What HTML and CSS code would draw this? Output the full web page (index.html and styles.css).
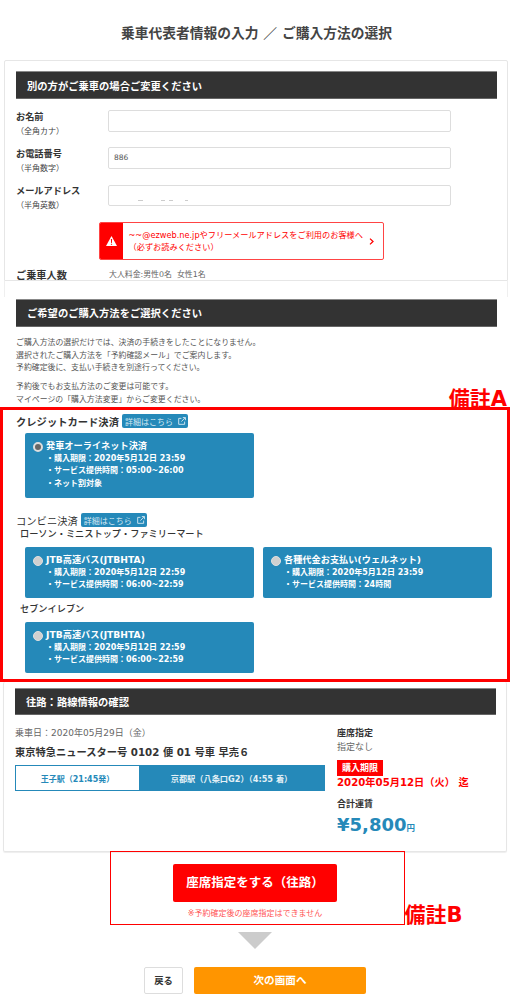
FILE: index.html
```html
<!DOCTYPE html>
<html lang="ja">
<head>
<meta charset="utf-8">
<title>乗車代表者情報の入力 ／ ご購入方法の選択</title>
<link rel="stylesheet" href="styles.css">
</head>
<body>
<h1 class="page-title">乗車代表者情報の入力 ／ ご購入方法の選択</h1>

<section class="card card-passenger">
  <h2 class="bar">別の方がご乗車の場合ご変更ください</h2>
  <div class="form-row">
    <div class="label"><b>お名前</b><span>（全角カナ）</span></div>
    <div class="input"></div>
  </div>
  <div class="form-row">
    <div class="label"><b>お電話番号</b><span>（半角数字）</span></div>
    <div class="input">886</div>
  </div>
  <div class="form-row">
    <div class="label"><b>メールアドレス</b><span>（半角英数）</span></div>
    <div class="input input-redacted"></div>
  </div>
  <a class="alert">
    <span class="alert-icon">
      <svg width="11" height="10" viewBox="0 0 11 10"><path fill="#fff" d="M5.5 0 11 10H0Z"/><path fill="#f00" d="M4.9 3h1.2l-.2 4H5.1ZM4.9 7.7h1.2v1.1H4.9Z"/></svg>
    </span>
    <span class="alert-text">~~@ezweb.ne.jpやフリーメールアドレスをご利用のお客様へ<br>（必ずお読みください）</span>
    <svg class="alert-chevron" width="5" height="7" viewBox="0 0 5 7"><path fill="none" stroke="#f00" stroke-width="1.3" d="M1 .6 4 3.5 1 6.4"/></svg>
  </a>
  <div class="count-row">
    <b>ご乗車人数</b>
    <span>大人料金:男性0名&nbsp;&nbsp;女性1名</span>
  </div>
</section>
<div class="card-stub"></div>

<section class="pay-intro">
  <h2 class="bar">ご希望のご購入方法をご選択ください</h2>
  <p>ご購入方法の選択だけでは、決済の手続きをしたことになりません。<br>選択されたご購入方法を「予約確認メール」でご案内します。<br>予約確定後に、支払い手続きを別途行ってください。</p>
  <p>予約後でもお支払方法のご変更は可能です。<br>マイページの「購入方法変更」からご変更ください。</p>
</section>

<section class="note-a">
  <strong class="note-label note-label-a">備註A</strong>
  <div class="method-head">
    <b class="method-title">クレジットカード決済</b>
    <a class="detail">詳細はこちら
      <svg width="8" height="8" viewBox="0 0 7 7"><path fill="none" stroke="#d5e8f2" stroke-width=".8" d="M3 1.2H.6v5.2h5.2V4M3 4l3.3-3.4M4.2.5h2.3v2.3"/></svg>
    </a>
  </div>
  <div class="option option-tall option-first">
    <div class="option-title"><i class="radio radio-on"></i>発車オーライネット決済</div>
    <div class="option-line">・購入期限：2020年5月12日 23:59</div>
    <div class="option-line">・サービス提供時間：05:00~26:00</div>
    <div class="option-line">・ネット割対象</div>
  </div>

  <div class="method-head method-head-second">
    <span class="method-title">コンビニ決済</span>
    <a class="detail">詳細はこちら
      <svg width="8" height="8" viewBox="0 0 7 7"><path fill="none" stroke="#d5e8f2" stroke-width=".8" d="M3 1.2H.6v5.2h5.2V4M3 4l3.3-3.4M4.2.5h2.3v2.3"/></svg>
    </a>
  </div>
  <div class="store">ローソン・ミニストップ・ファミリーマート</div>
  <div class="option-row">
    <div class="option">
      <div class="option-title"><i class="radio"></i>JTB高速バス(JTBHTA)</div>
      <div class="option-line">・購入期限：2020年5月12日 22:59</div>
      <div class="option-line">・サービス提供時間：06:00~22:59</div>
    </div>
    <div class="option">
      <div class="option-title"><i class="radio"></i>各種代金お支払い(ウェルネット)</div>
      <div class="option-line">・購入期限：2020年5月12日 23:59</div>
      <div class="option-line">・サービス提供時間：24時間</div>
    </div>
  </div>
  <div class="store store-second">セブンイレブン</div>
  <div class="option-row">
    <div class="option">
      <div class="option-title"><i class="radio"></i>JTB高速バス(JTBHTA)</div>
      <div class="option-line">・購入期限：2020年5月12日 22:59</div>
      <div class="option-line">・サービス提供時間：06:00~22:59</div>
    </div>
  </div>
</section>

<section class="card card-route">
  <h2 class="bar">往路：路線情報の確認</h2>
  <div class="route-cols">
    <div class="route-main">
      <div class="route-date">乗車日：2020年05月29日（金）</div>
      <div class="route-name">東京特急ニュースター号 0102 便 01 号車 早売６</div>
      <div class="route-bar">
        <span class="route-from">王子駅（21:45発）</span>
        <span class="route-to">京都駅（八条口G2）（4:55 着）</span>
      </div>
    </div>
    <div class="route-side">
      <div class="side-head">座席指定</div>
      <div class="side-value">指定なし</div>
      <div class="limit-badge">購入期限</div>
      <div class="limit-date">2020年05月12日（火） 迄</div>
      <div class="side-head side-total">合計運賃</div>
      <div class="price">¥5,800<small>円</small></div>
    </div>
  </div>
</section>

<section class="note-b">
  <strong class="note-label note-label-b">備註B</strong>
  <a class="seat-button">座席指定をする（往路）</a>
  <p class="seat-note">※予約確定後の座席指定はできません</p>
</section>

<div class="arrow"></div>

<div class="actions">
  <a class="back">戻る</a>
  <a class="next">次の画面へ</a>
</div>
</body>
</html>
```

FILE: styles.css
```css
* { box-sizing: border-box; }
html, body { margin: 0; padding: 0; }
body {
  width: 510px;
  height: 1000px;
  overflow: hidden;
  background: #fff;
  color: #333;
  font-family: "DejaVu Sans", "Noto Sans CJK JP", sans-serif;
}
h1, h2, p { margin: 0; }
a { display: block; }

.page-title {
  height: 60px;
  padding: 24px 0 0 3px;
  font-size: 13.75px;
  line-height: 18px;
  font-weight: 700;
  text-align: center;
  color: #444;
}

.card {
  width: 504px;
  border: 1px solid #e6e6e6;
  border-radius: 2px;
  padding-left: 11px;
}
.bar {
  width: 481px;
  background: #333;
  border-top: 1px solid #888;
  border-bottom: 1px solid #666;
  color: #fff;
  font-size: 10.3px;
  font-weight: 700;
  padding-left: 11px;
  display: flex;
  align-items: center;
}

.card-passenger {
  margin-left: 4px;
  height: 221px;
  padding-top: 10px;
  overflow: hidden;
  border-radius: 2px 2px 0 0;
}
.card-passenger .bar { height: 28px; margin-bottom: 9.5px; }
.form-row {
  display: grid;
  grid-template-columns: 92px 343px;
  height: 37.25px;
}
.label { display: flex; flex-direction: column; line-height: 15px; }
.label b { font-size: 9.2px; font-weight: 700; }
.label span { font-size: 8px; color: #444; }
.input {
  margin-top: 1.5px;
  height: 21.5px;
  border: 1px solid #ddd;
  border-radius: 2px;
  padding-left: 5px;
  font-size: 7.5px;
  line-height: 20px;
  color: #555;
}
.input-redacted {
  background:
    linear-gradient(#ccc, #ccc) 29px 14px / 5px 1px no-repeat,
    linear-gradient(#ccc, #ccc) 52px 14px / 4px 1px no-repeat,
    linear-gradient(#ccc, #ccc) 60px 14px / 4px 1px no-repeat,
    linear-gradient(#ccc, #ccc) 76px 14px / 3px 1px no-repeat;
}
.alert {
  display: flex;
  align-items: center;
  width: 285px;
  height: 38px;
  margin: 1.75px 0 0 83px;
  border: 1px solid #f44;
  border-radius: 2px;
  overflow: hidden;
  color: #f00;
}
.alert-icon {
  flex: none;
  width: 23px;
  height: 100%;
  background: #f00;
  display: flex;
  align-items: center;
  justify-content: center;
}
.alert-text {
  flex: 1;
  padding-left: 5.5px;
  font-size: 8.2px;
  line-height: 12.5px;
  white-space: nowrap;
}
.alert-chevron { flex: none; margin-right: 9px; }
.count-row {
  display: grid;
  grid-template-columns: 93px auto;
  margin-top: 7.5px;
  line-height: 15px;
}
.count-row b { font-size: 10.2px; font-weight: 700; }
.count-row span { font-size: 7.9px; color: #666; line-height: 13px; }

.card-stub {
  width: 504px;
  height: 16px;
  margin-left: 4px;
  border-left: 1px solid #efefef;
  border-right: 1px solid #efefef;
}

.pay-intro { padding: 2px 0 0 16px; height: 110px; }
.pay-intro .bar { height: 27.5px; }
.pay-intro p {
  font-size: 7.9px;
  line-height: 12.5px;
  color: #555;
  margin-top: 6.5px;
}
.pay-intro .bar + p { margin-top: 10.5px; }

.note-a {
  position: relative;
  height: 275px;
  border: 3px solid #f00;
  padding: 4px 0 0 13px;
}
.note-label {
  position: absolute;
  color: #f00;
  font-size: 21px;
  line-height: 24px;
  font-weight: 700;
  white-space: nowrap;
}
.note-label-a { right: 0; top: -23px; }
.note-label-b { left: 293.5px; top: 51px; }

.method-head { display: flex; align-items: center; gap: 3px; height: 14px; }
.method-head-second { margin-top: 15.5px; gap: 3px; }
.method-title { font-size: 10.3px; white-space: nowrap; }
b.method-title { font-weight: 700; }
.detail {
  display: flex;
  align-items: center;
  gap: 5px;
  width: 66px;
  height: 14px;
  padding-left: 3px;
  background: #2589b9;
  border-radius: 2px;
  color: #d5e8f2;
  font-size: 8px;
  white-space: nowrap;
}
.store {
  margin: 1px 0 7px 4px;
  font-size: 9.2px;
  line-height: 12px;
  font-weight: 500;
}
.store-second { margin-top: 5px; }
.option-row { display: flex; gap: 9px; margin-left: 9px; }
.option {
  width: 229px;
  height: 51px;
  padding: 7px 0 0 8px;
  background: #2589b9;
  border-radius: 2px;
  color: #fff;
}
.option-first { height: 64.5px; margin: 5px 0 0 9px; }
.option-title {
  display: flex;
  align-items: center;
  gap: 3px;
  font-size: 9.2px;
  line-height: 12.5px;
  font-weight: 700;
  white-space: nowrap;
}
.option-line {
  padding-left: 13px;
  font-size: 8px;
  line-height: 12.5px;
  font-weight: 700;
  white-space: nowrap;
}
.radio {
  flex: none;
  width: 10px;
  height: 10px;
  margin-top: 1px;
  border-radius: 50%;
  background: #d0d0d0;
  border: 1px solid #e0e0e0;
}
.radio-on { background: #666; border: 2px solid #ddd; }

.card-route {
  margin-left: 3px;
  height: 170px;
  padding-top: 6px;
  border-top: 0;
  box-shadow: 0 1px 1px #eee;
}
.card-route .bar { height: 27px; }
.route-cols {
  display: grid;
  grid-template-columns: 310px auto;
  gap: 12px;
  margin-top: 11px;
}
.route-date { font-size: 9px; line-height: 14px; color: #666; }
.route-name {
  margin-top: 5px;
  font-size: 10.25px;
  line-height: 14px;
  font-weight: 700;
  white-space: nowrap;
}
.route-bar {
  display: flex;
  height: 26px;
  margin-top: 6px;
  border: 1px solid #2589b9;
  font-size: 8px;
  font-weight: 700;
  color: #2589b9;
}
.route-bar span { display: flex; align-items: center; justify-content: center; }
.route-from { width: 123px; }
.route-to { flex: 1; background: #2589b9; color: #e4f1f7; font-size: 8.2px; }
.side-head { font-size: 9px; line-height: 14px; font-weight: 700; }
.side-value { font-size: 9px; line-height: 14px; color: #666; }
.limit-badge {
  width: 46px;
  height: 16px;
  margin-top: 5.5px;
  background: #f00;
  color: #fff;
  font-size: 9px;
  line-height: 16px;
  font-weight: 700;
  text-align: center;
}
.limit-date {
  font-size: 10.2px;
  line-height: 14px;
  font-weight: 700;
  color: #f00;
  white-space: nowrap;
}
.side-total { margin-top: 7px; }
.price {
  margin-top: 1px;
  font-size: 18px;
  line-height: 26px;
  font-weight: 700;
  color: #2589b9;
  white-space: nowrap;
}
.price small { font-size: 8.5px; }

.note-b {
  position: relative;
  width: 295px;
  height: 74px;
  margin: -1px 0 0 110px;
  border: 1.5px solid #f00;
  padding: 11.5px 5px 0 0;
  text-align: center;
  background: transparent;
}
.seat-button {
  width: 164px;
  height: 38px;
  margin: 0 auto;
  background: #f00;
  border-radius: 2px;
  color: #fff;
  font-size: 12.5px;
  line-height: 38px;
  font-weight: 700;
}
.seat-note {
  margin-top: 6px;
  font-size: 8px;
  line-height: 12px;
  color: #f55;
}

.arrow {
  width: 0;
  height: 0;
  margin: 7px 0 0 238px;
  border-left: 17px solid transparent;
  border-right: 17px solid transparent;
  border-top: 17px solid #ccc;
}

.actions {
  display: flex;
  gap: 11px;
  margin: 18px 0 0 144px;
  font-weight: 700;
  text-align: center;
}
.back {
  width: 39px;
  height: 27px;
  border: 1px solid #ddd;
  border-radius: 2px;
  font-size: 9.3px;
  line-height: 25px;
  color: #333;
}
.next {
  width: 172px;
  height: 27px;
  background: #ff9500;
  border-radius: 2px;
  color: #fff;
  font-size: 10.6px;
  line-height: 27px;
}
```
